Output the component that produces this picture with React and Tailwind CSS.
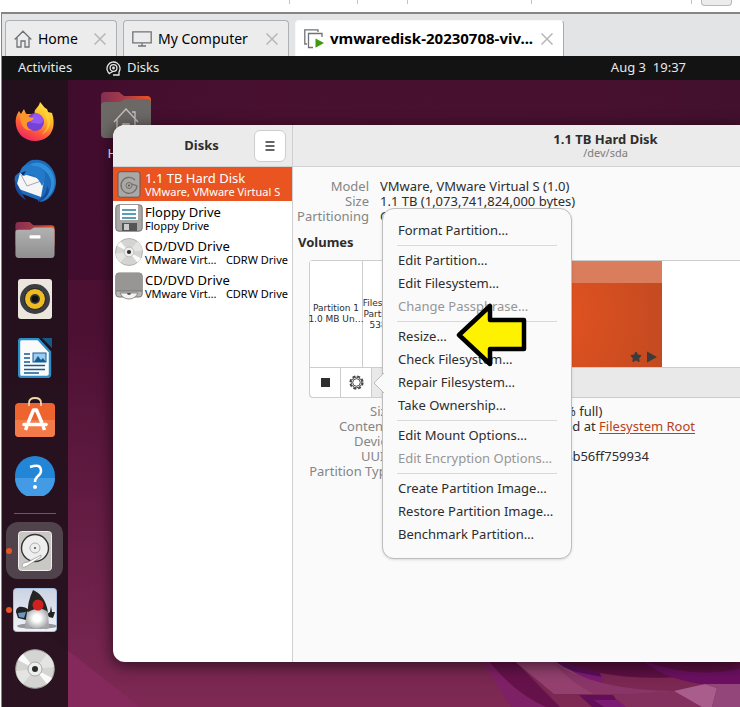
import React from "react";
import { Star } from "lucide-react";

function Wallpaper() {
  return (
    <svg className="absolute inset-0 h-full w-full" viewBox="0 80 740 627" preserveAspectRatio="xMinYMax slice" aria-hidden="true">
      <defs>
        <linearGradient id="sky" x1="0" y1="0" x2="0" y2="1">
          <stop offset="0" stopColor="#48102f" />
          <stop offset="0.4" stopColor="#4c1033" />
          <stop offset="1" stopColor="#7d2954" />
        </linearGradient>
        <linearGradient id="shade" x1="0" y1="0" x2="1" y2="0">
          <stop offset="0" stopColor="#38082a" stopOpacity="0.8" />
          <stop offset="0.5" stopColor="#4e1233" stopOpacity="0" />
          <stop offset="1" stopColor="#38102a" stopOpacity="0.4" />
        </linearGradient>
      </defs>
      <rect y="80" width="740" height="627" fill="url(#sky)" />
      <rect y="80" width="740" height="200" fill="url(#shade)" />
      <path d="M0 600L68 652L138 707H0Z" fill="#85285c" />
      <path d="M478 655L555 707H509L480 660Z" fill="#7e2065" />
      <path d="M482 655Q510 692 544 707H558L507 655Z" fill="#65124a" />
      <path d="M505 655H551Q575 680 625 690L592 694H552Z" fill="#93406f" />
      <path d="M551 662Q590 690 672 691L662 695L592 694Q570 684 551 662Z" fill="#8a3567" />
      <path d="M551 660L598 673L601 681Q570 674 551 660Z" fill="#5b0e5a" />
      <path d="M570 671L600 677L602 682Q585 681 570 671Z" fill="#7c1b73" />
      <path d="M551 660H740V670Q660 684 598 673Z" fill="#5c1042" />
      <path d="M640 660Q665 682 715 686L740 684V668Q690 680 640 660Z" fill="#6b1060" />
      <path d="M577 695H611L614 700L592 700L602 707H590Z" fill="#620e58" />
      <path d="M592 700L614 700L624 707H602Z" fill="#7c1b73" />
      <path d="M611 695L672 691L700 707H624Z" fill="#84305e" />
      <path d="M672 691L703 684L715 688L710 707H700Z" fill="#a95d8c" />
      <path d="M703 684H740V707H710L715 688Z" fill="#93467a" />
    </svg>
  );
}

function Cross() {
  return (
    <svg className="size-3" viewBox="0 0 12 12" stroke="#b4b6b8" strokeWidth="1.5" aria-hidden="true">
      <path d="M0.5 0.5L11.5 11.5M11.5 0.5L0.5 11.5" />
    </svg>
  );
}

function Tab({ icon, label, width, active }) {
  return (
    <div className={`flex h-9 items-center rounded-t border border-b-0 pr-2.5 pl-2 ${width} ${active ? "border-[#f8f8f8] border-r-[#a8aaac] bg-white text-[15px] font-bold" : "border-[#aeb0b2] bg-[#ececed] text-sm"}`}>
      <button type="button" className="flex flex-1 items-center gap-1.5 whitespace-nowrap">
        {icon}
        <span>{label}</span>
      </button>
      <button type="button" aria-label={`Close ${label}`} className="shrink-0"><Cross /></button>
    </div>
  );
}

const HomeTabIcon = () => (
  <svg className="size-[18px] shrink-0" viewBox="0 0 18 18" fill="none" stroke="#707274" strokeWidth="1.3" aria-hidden="true">
    <path d="M0.7 9.5L9 1.2L17.3 9.5M3 8V17H7V11H11V17H15V8" />
  </svg>
);
const MonitorIcon = () => (
  <svg className="h-4 w-5 shrink-0" viewBox="0 0 20 16" fill="none" stroke="#707274" strokeWidth="1.3" aria-hidden="true">
    <path d="M0.8 0.8H19.2V11.8H0.8ZM10 12V15M6 15H14" />
  </svg>
);
const RunningIcon = () => (
  <svg className="size-5 shrink-0" viewBox="0 0 20 20" fill="none" aria-hidden="true">
    <path d="M14 3V0.8H0.8V15H3M9 18.5H4.5V4.5H18V8" stroke="#707274" strokeWidth="1.3" />
    <path d="M11.5 9.5L20 14L11.5 18.8Z" fill="#3d9a0c" />
  </svg>
);

const Firefox = () => (
  <svg className="size-10" viewBox="0 0 40 40" aria-hidden="true">
    <defs>
      <linearGradient id="fox" x1="0.8" y1="0" x2="0.3" y2="1">
        <stop offset="0" stopColor="#fff044" /><stop offset="0.4" stopColor="#ffb02a" /><stop offset="0.7" stopColor="#ff5a38" /><stop offset="1" stopColor="#ee2366" />
      </linearGradient>
    </defs>
    <path d="M20 12C18 7 24 6 25 0C28 3 29 6 32 7L33 10L37 11C39 17 39 22 38 26C36 34 29 39 20 39C10 39 2 32 1 23C0 18 1 13 4 9L6 12L9 7L11 12Z" fill="url(#fox)" />
    <circle cx="20" cy="20" r="9" fill="#7641d8" />
    <path d="M18 13C22 9 29 14 28 20C24 24 19 20 15 21Z" fill="#9559f2" />
    <path d="M5 13C9 9 13 12 14 15L19 16C18 19 14 19 12 21C11 24 13 27 17 28C9 30 5 22 5 13Z" fill="#ff952b" />
    <path d="M29 12C34 18 34 27 26 33C36 28 38 19 32 8Z" fill="#ffd63b" opacity="0.65" />
  </svg>
);
const Thunderbird = () => (
  <svg className="size-11" viewBox="0 0 44 44" aria-hidden="true">
    <path d="M8 12C12 4 18 0 22 1C31 -1 42 8 43 21C44 33 35 43 27 43C28 41 24 41 20 39L7 34C2 29 0 20 3 16Z" fill="#1d6bbb" />
    <path d="M12 10C18 5 30 7 36 17C42 27 34 38 29 42C40 37 45 25 39 13C32 3 21 -1 12 10Z" fill="#2f8fd8" />
    <path d="M7 14L31 21L28 38L3 29Z" fill="#f5f5f6" />
    <path d="M7 14L14 27L31 21" fill="none" stroke="#a4a8ad" />
    <path d="M7 13C9 5 16 4 21 7C31 7 36 17 29 27C25 17 17 13 11 17Z" fill="#2479c9" />
    <path d="M8 14L13 12L10 17Z" fill="#0d2b5b" />
    <path d="M2 21C1 31 6 37 13 41C9 35 9 33 2 21ZM25 41C31 38 34 32 34 27C39 32 34 40 25 43Z" fill="#174c9c" />
  </svg>
);
const Folder = ({ className, home }) => (
  <svg className={className} viewBox="0 0 50 46" aria-hidden="true">
    <defs>
      <linearGradient id="folderBack"><stop offset="0" stopColor="#842e52" /><stop offset="0.5" stopColor="#a93d47" /><stop offset="1" stopColor="#ef5321" /></linearGradient>
      <linearGradient id="folderGrey" x2="0" y2="1"><stop offset="0" stopColor="#b2b2b2" /><stop offset="1" stopColor="#8f8f8f" /></linearGradient>
    </defs>
    <path d="M0 4Q0 0 4 0H18L23 4H46Q50 4 50 8V30H0Z" fill="url(#folderBack)" />
    <path d="M0 13Q0 10 4 10H19L24 7H46Q50 7 50 11V41Q50 46 46 46H4Q0 46 0 42Z" fill={home ? "#6c6866" : "url(#folderGrey)"} />
    {home
      ? <path d="M13 30L25 17L37 30M16 27V44M34 27V44M31 20H34V26M22 44V32H28V44" fill="none" stroke="#c3c0be" strokeWidth="1.3" />
      : <rect x="18" y="17" width="14" height="4" rx="1" fill="#fff" />}
  </svg>
);
const Rhythmbox = () => (
  <svg className="h-10 w-[34px]" viewBox="0 0 34 40" aria-hidden="true">
    <rect width="34" height="40" rx="3" fill="#ebe7df" />
    <circle cx="17" cy="20" r="15" fill="#3c3d43" />
    <circle cx="17" cy="20" r="10.5" fill="#edbb22" stroke="#1e2025" />
    <circle cx="17" cy="20" r="5" fill="#34373a" /><circle cx="17" cy="20" r="3.3" fill="#111" />
  </svg>
);
const Writer = () => (
  <svg className="h-10 w-[34px]" viewBox="0 0 34 40" aria-hidden="true">
    <path d="M4 1H20L32 14V36Q32 39 29 39H4Q1 39 1 36V4Q1 1 4 1Z" fill="#fafafa" stroke="#2c8fc5" strokeWidth="2.4" />
    <path d="M24 0H34V10Z" fill="#145b8c" />
    <path d="M6 16H12M6 20H12M6 24H12M6 27.5H27M6 31.5H27M6 35H21" stroke="#145b96" strokeWidth="1.6" />
    <rect x="15" y="15" width="13" height="9" fill="#9ccdf0" stroke="#145b96" />
    <path d="M16 24L20 18L23 22L25 20L28 24Z" fill="#145b96" />
  </svg>
);
const Software = () => (
  <svg className="h-10 w-10" viewBox="0 0 40 40" aria-hidden="true">
    <rect y="6" width="40" height="34" rx="4" fill="#ee642f" />
    <path d="M0 23H40V36Q40 40 36 40H4Q0 40 0 36Z" fill="#f37b49" />
    <path d="M14 9V6Q14 1 20 1Q26 1 26 6V9" fill="none" stroke="#efd7a6" strokeWidth="1.8" />
    <path d="M13 26L18.5 13H21.5L27 26M12 29L10.500 33M28 29L29.500 33" fill="none" stroke="#fff" strokeWidth="3.500" strokeLinejoin="round" />
    <path d="M9 27.500H31" stroke="#fff" strokeWidth="3.500" strokeLinecap="round" />
  </svg>
);
const Help = () => (
  <svg className="size-10" viewBox="0 0 40 40" aria-hidden="true">
    <circle cx="20" cy="20" r="20" fill="#2385d6" />
    <path d="M0 22H40A20 20 0 0 1 0 22Z" fill="#429be4" />
    <path d="M15 11Q26 7 26 15Q26 18 22 21Q20 23 20 26" fill="none" stroke="#fff" strokeWidth="2.5" />
    <circle cx="20" cy="31" r="2" fill="#fff" />
  </svg>
);
const HardDisk = () => (
  <svg className="h-10 w-[34px]" viewBox="0 0 34 40" aria-hidden="true">
    <rect x="0.5" y="0.5" width="33" height="39" rx="3" fill="#c9c8c5" stroke="#eee" />
    <circle cx="17" cy="17" r="13.5" fill="#eee" stroke="#333" strokeWidth="1.4" />
    <circle cx="17" cy="17" r="5" fill="none" stroke="#b0b0b0" /><circle cx="17" cy="17" r="1" fill="#444" />
    <path d="M23 26L9 35Q4 38 4 34Q5 31 10 31L23 24Z" fill="#fff" stroke="#999" strokeWidth="0.8" />
  </svg>
);
const Duke = () => (
  <svg className="size-11" viewBox="0 0 44 44" aria-hidden="true">
    <defs>
      <linearGradient id="dukeBg" x2="0" y2="1"><stop offset="0" stopColor="#cbd3e2" /><stop offset="1" stopColor="#f1f3f8" /></linearGradient>
      <radialGradient id="dukeBody"><stop offset="0.3" stopColor="#fff" /><stop offset="1" stopColor="#a5a5a8" /></radialGradient>
    </defs>
    <rect x="0.5" y="0.5" width="43" height="43" rx="3" fill="url(#dukeBg)" stroke="#a7c0df" />
    <ellipse cx="24" cy="38" rx="20" ry="3" fill="#9698a0" />
    <path d="M3 24C3 17 11 18 16 22L13 32L5 30Z" fill="#222" />
    <path d="M5 25L13 24L11 30L6 29Z" fill="#6698c2" />
    <path d="M34 26L37 24L38 18L39 24L42 24L40 30L36 29Z" fill="#222" />
    <path d="M14 24Q25 14 35 24L36 40Q32 43 29 39Q23 43 18 39Q11 43 12 38Z" fill="url(#dukeBody)" />
    <path d="M20 2Q32 7 35 24Q27 17 15 24Q14 15 20 2Z" fill="#252525" />
    <circle cx="25" cy="17" r="5.5" fill="#d2201f" />
  </svg>
);
const Disc = ({ className }) => (
  <svg className={className} viewBox="0 0 40 40" aria-hidden="true">
    <circle cx="20" cy="20" r="19.3" fill="#d4d4d2" stroke="#a09e9b" strokeWidth="1" />
    <path d="M20 20L3 11A19 19 0 0 1 8 5ZM20 20L37 29A19 19 0 0 1 32 35Z" fill="#fafafa" />
    <path d="M20 20L32 5A19 19 0 0 1 39 18ZM20 20L8 35A19 19 0 0 1 1 22Z" fill="#e4e4e2" />
    <circle cx="20" cy="20" r="7" fill="#eee" stroke="#aaa" /><circle cx="20" cy="20" r="3" fill="#2c2c2c" />
  </svg>
);

const DriveIcon = () => (
  <svg className="h-[27px] w-6" viewBox="0 0 24 27" aria-hidden="true">
    <rect x="1" y="0.7" width="22" height="25.5" rx="2.5" fill="#aaa7a4" stroke="#5e5a58" />
    <path d="M18 9A8 8 0 1 0 20 15L15 13" fill="none" stroke="#706d6b" strokeWidth="1.2" />
    <circle cx="12" cy="14.5" r="3" fill="none" stroke="#706d6b" /><circle cx="12" cy="14.5" r="1" fill="#555" />
  </svg>
);
const FloppyIcon = () => (
  <svg className="size-7" viewBox="0 0 28 28" aria-hidden="true">
    <rect x="0.8" y="0.8" width="26.4" height="26.4" rx="3" fill="#a9a7a5" stroke="#777" />
    <path d="M5 1H23V16H5Z" fill="#fff" /><path d="M7 6H21M7 10H21M7 14H21" stroke="#287f9f" strokeWidth="1.3" />
    <path d="M7 19H22V27H7Z" fill="#555" /><path d="M9 20H14V26H9Z" fill="#ccc" />
  </svg>
);
const OpticalIcon = () => (
  <svg className="size-7" viewBox="0 0 28 28" aria-hidden="true">
    <rect x="0.8" y="1" width="26.4" height="24" rx="3" fill="#b8b6b4" stroke="#777" />
    <path d="M1 4Q1 1 4 1H24Q27 1 27 4V19H1Z" fill="#989694" /><path d="M1 19H27" stroke="#777" />
    <path d="M5 21H23Q20 27 14 27Q8 27 5 21Z" fill="#f4f4f4" stroke="#777" strokeWidth="0.8" /><path d="M12 21H16Q16 23 14 23Q12 23 12 21Z" fill="#555" />
  </svg>
);

const dock = [
  { name: "Firefox", icon: <Firefox /> },
  { name: "Thunderbird", icon: <Thunderbird /> },
  { name: "Files", icon: <Folder className="h-9 w-10" /> },
  { name: "Rhythmbox", icon: <Rhythmbox /> },
  { name: "Writer", icon: <Writer /> },
  { name: "Software", icon: <Software /> },
  { name: "Help", icon: <Help /> },
];
const running = [
  { name: "Disks", icon: <HardDisk />, dot: true, active: true },
  { name: "Java", icon: <Duke />, dot: true },
  { name: "Disc", icon: <Disc className="size-10" /> },
];

function DockItem({ name, icon, dot, active }) {
  return (
    <button type="button" aria-label={name} className="flex h-[59px] w-full shrink-0 items-center">
      <span className={`-mr-1.5 ml-1 size-1.5 shrink-0 rounded-full ${dot ? "z-10 bg-[#e95420]" : ""}`} />
      <span className={`flex h-[57px] w-[57px] items-center justify-center rounded-xl ${active ? "bg-[#51434b]" : ""}`}>{icon}</span>
    </button>
  );
}

const drives = [
  { title: "1.1 TB Hard Disk", detail: "VMware, VMware Virtual S", icon: <DriveIcon />, selected: true },
  { title: "Floppy Drive", detail: "Floppy Drive", icon: <FloppyIcon /> },
  { title: "CD/DVD Drive", detail: "VMware Virt…", extra: "CDRW Drive", icon: <Disc className="size-7" /> },
  { title: "CD/DVD Drive", detail: "VMware Virt…", extra: "CDRW Drive", icon: <OpticalIcon /> },
];

const menu = [
  ["Format Partition…"],
  ["Edit Partition…", "Edit Filesystem…", "Change Passphrase…"],
  ["Resize…", "Check Filesystem…", "Repair Filesystem…", "Take Ownership…"],
  ["Edit Mount Options…", "Edit Encryption Options…"],
  ["Create Partition Image…", "Restore Partition Image…", "Benchmark Partition…"],
];
const disabled = ["Change Passphrase…", "Edit Encryption Options…"];

function PartitionMenu() {
  return (
    <div role="menu" className="absolute top-[83px] left-[269px] w-[190px] rounded-xl border border-[#bdbdbd] bg-[#fafafa] px-3.5 pt-2.5 pb-3 shadow">
      <svg className="absolute top-[164px] -left-[10px] h-5 w-[11px]" viewBox="0 0 11 20" aria-hidden="true">
        <path d="M11 0L1 10L11 20" fill="#fafafa" stroke="#bdbdbd" />
      </svg>
      {menu.map((group, i) => (
        <div key={group[0]} className={i ? "mt-[3px] border-t border-[#d9d9d9] pt-[3px]" : ""}>
          {group.map((item) => (
            <button key={item} type="button" role="menuitem" disabled={disabled.includes(item)} className="block h-[23px] w-full pl-px text-left whitespace-nowrap disabled:text-[#969696]">
              {item}
            </button>
          ))}
        </div>
      ))}
    </div>
  );
}

function Annotation() {
  return (
    <svg className="absolute top-[178px] left-[342px] h-[65px] w-[72px]" viewBox="0 0 72 65" aria-hidden="true">
      <path d="M4 32L35 3V17H69V46H35V61Z" fill="#fff200" stroke="#000" strokeWidth="4.5" strokeLinejoin="round" />
    </svg>
  );
}

const details = [
  ["Size", "% full)"],
  ["Contents", "ed at"],
  ["Device", ""],
  ["UUID", "4b56ff759934"],
  ["Partition Type", ""],
];

function DisksWindow() {
  return (
    <section className="absolute inset-y-[45px] right-0 left-[45px] flex rounded-l-xl bg-white shadow-[0_3px_14px_2px_rgba(0,0,0,0.5)]">
      <aside className="flex w-[180px] shrink-0 flex-col rounded-l-xl border-r border-[#cfcfcf]">
        <header className="flex h-[42px] items-center rounded-tl-xl border-b border-[#d2d2d2] bg-[#ebebeb] pr-1.5">
          <h1 className="flex-1 pl-9 text-center font-bold">Disks</h1>
          <button type="button" aria-label="Menu" className="flex size-8 items-center justify-center rounded-md border border-[#cdcdcd] bg-white">
            <svg className="h-2.5 w-2.5" viewBox="0 0 10 10" stroke="#333" strokeWidth="1.5"><path d="M0.500 1H9.500M0.500 5H9.500M0.500 9H9.500" /></svg>
          </button>
        </header>
        {drives.map((d, i) => (
          <button key={i} type="button" className={`flex h-[34px] items-center text-left ${d.selected ? "bg-[#e95420] text-white" : "text-black"}`}>
            <span className="flex w-8 shrink-0 justify-center">{d.icon}</span>
            <span className="min-w-0 flex-1 pr-1">
              <span className="block leading-4">{d.title}</span>
              <span className="flex justify-between text-[11px] leading-3 whitespace-nowrap"><span>{d.detail}</span><span>{d.extra}</span></span>
            </span>
          </button>
        ))}
      </aside>
      <main className="min-w-0 flex-1 overflow-hidden bg-[#fafafa]">
        <header className="flex h-[42px] justify-center border-b border-[#d2d2d2] bg-[#ebebeb] pt-1.5">
          <div className="ml-[178px] flex-1 text-center">
            <h2 className="leading-4 font-bold">1.1 TB Hard Disk</h2>
            <p className="text-[11px] leading-3 text-[#7d7d7d]">/dev/sda</p>
          </div>
        </header>
        <dl className="grid grid-cols-[76px_1fr] gap-x-[11px] pt-3 leading-[15px] whitespace-nowrap">
          <dt className="text-right text-[#858585]">Model</dt><dd>VMware, VMware Virtual S (1.0)</dd>
          <dt className="text-right text-[#858585]">Size</dt><dd>1.1 TB (1,073,741,824,000 bytes)</dd>
          <dt className="text-right text-[#858585]">Partitioning</dt><dd>GUID Partition Table</dd>
        </dl>
        <h3 className="mt-2.5 pl-[5px] leading-4 font-bold">Volumes</h3>
        <div className="mt-2.5 ml-4 rounded-l border border-r-0 border-[#cdcdcd] bg-[#e9e9e9] [font-family:'DejaVu_Sans',sans-serif]">
          <div className="flex h-[107px] border-b border-[#cdcdcd] bg-white text-center text-[9px] leading-[11px] whitespace-nowrap">
            <div className="flex w-[53px] shrink-0 flex-col items-center justify-center border-r border-[#cdcdcd]"><span>Partition 1</span><span>1.0 MB Un…</span></div>
            <div className="flex w-12 shrink-0 flex-col items-center justify-center border-r border-[#cdcdcd]"><span>Filesystem</span><span>Partition 2</span><span>538 MB</span></div>
            <div className="relative w-[251px] shrink-0 bg-[radial-gradient(circle_at_center,#e95420,#c24a20)]">
              <div className="h-[22px] bg-[#d97d5d]" />
              <div className="absolute right-1 bottom-1 flex items-center gap-1">
                <Star className="size-3 fill-[#3c3c3c] text-[#3c3c3c]" />
                <svg className="size-3" viewBox="0 0 12 12"><path d="M1 0.5L11 6L1 11.5Z" fill="#3c3c3c" /></svg>
              </div>
            </div>
          </div>
          <div className="flex h-[29px]">
            <button type="button" aria-label="Unmount" className="flex w-[31px] items-center justify-center rounded-bl border-r border-[#cdcdcd] bg-white"><span className="size-[9px] bg-[#303030]" /></button>
            <button type="button" aria-label="Partition options" className="flex w-[31px] items-center justify-center border-r border-[#cdcdcd] bg-white">
              <svg className="size-[15px]" viewBox="0 0 15 15" fill="none" stroke="#444"><circle cx="7.5" cy="7.5" r="6.3" strokeWidth="1.6" strokeDasharray="3 1.95" /><circle cx="7.5" cy="7.5" r="5.300" /><circle cx="7.5" cy="7.5" r="3.8" /></svg>
            </button>
          </div>
        </div>
        <dl className="mt-1.5 grid grid-cols-[101px_1fr] leading-[15px] whitespace-nowrap">
          {details.map(([name, value]) => (
            <React.Fragment key={name}>
              <dt className="text-right text-[#858585]">{name}</dt>
              <dd className="pl-[171px]">{value}{name === "Contents" && <> <a href="#root" className="text-[#b8401a] underline underline-offset-2">Filesystem Root</a></>}</dd>
            </React.Fragment>
          ))}
        </dl>
      </main>
      <PartitionMenu />
      <Annotation />
    </section>
  );
}

export default function App() {
  return (
    <div className="flex h-screen min-h-[640px] flex-col overflow-hidden bg-white pl-px text-[13px] text-[#2d2d2d] [font-family:'Noto_Sans',sans-serif]">
      <div className="flex h-3 shrink-0 items-start justify-end bg-white pr-2">
        {["w-[68px]", "w-[50px]", "w-[124px]", "w-[160px]", "w-2.5"].map((w) => (
          <span key={w} className={`h-1 border-l border-[#c4c4c4] ${w}`} />
        ))}
        <span className="h-1.5 w-[31px] rounded-b border border-t-0 border-[#b8b8b8] bg-[#ececec]" />
      </div>
      <div className="flex min-h-0 flex-1 flex-col border-t-2 border-l border-[#858585]">
        <nav className="flex h-[42px] shrink-0 items-end gap-1.5 bg-[#e2e4e6] pl-[3px] text-black">
          <Tab icon={<HomeTabIcon />} label="Home" width="w-28" />
          <Tab icon={<MonitorIcon />} label="My Computer" width="w-[166px]" />
          <Tab icon={<RunningIcon />} label="vmwaredisk-20230708-viv..." width="w-[269px]" active />
        </nav>
        <div className="flex h-6 shrink-0 items-center bg-[#131313] text-[#e8e8e8]">
          <button type="button" className="w-[104px] pl-4 text-left">Activities</button>
          <button type="button" className="flex items-center gap-1.5">
            <svg className="size-[15px]" viewBox="0 0 15 15" fill="none" stroke="#e8e8e8" strokeWidth="1.3"><path d="M4 13A6.500 6.500 0 1 1 13 11V14H7" /><circle cx="7.5" cy="7" r="3.4" /><circle cx="7.5" cy="7" r="0.8" /><path d="M3 12.500L7 10.500" /></svg>
            Disks
          </button>
          <time className="mr-[54px] ml-auto whitespace-pre">Aug 3  19:37</time>
        </div>
        <div className="relative flex min-h-0 flex-1 overflow-hidden">
          <Wallpaper />
          <nav aria-label="Dock" className="relative flex w-[66px] shrink-0 flex-col bg-[#21111c]/90 pt-3">
            {dock.map((item) => <DockItem key={item.name} {...item} />)}
            <hr className="mx-3 mt-2 mb-[7px] border-[#6a5a64]" />
            {running.map((item) => <DockItem key={item.name} {...item} />)}
          </nav>
          <div className="relative min-w-0 flex-1">
            <div className="absolute top-3 left-[33px] w-[50px] text-center text-white">
              <Folder className="h-[46px] w-[50px]" home />
              <p className="mt-1.5">Home</p>
            </div>
            <DisksWindow />
          </div>
        </div>
      </div>
    </div>
  );
}
